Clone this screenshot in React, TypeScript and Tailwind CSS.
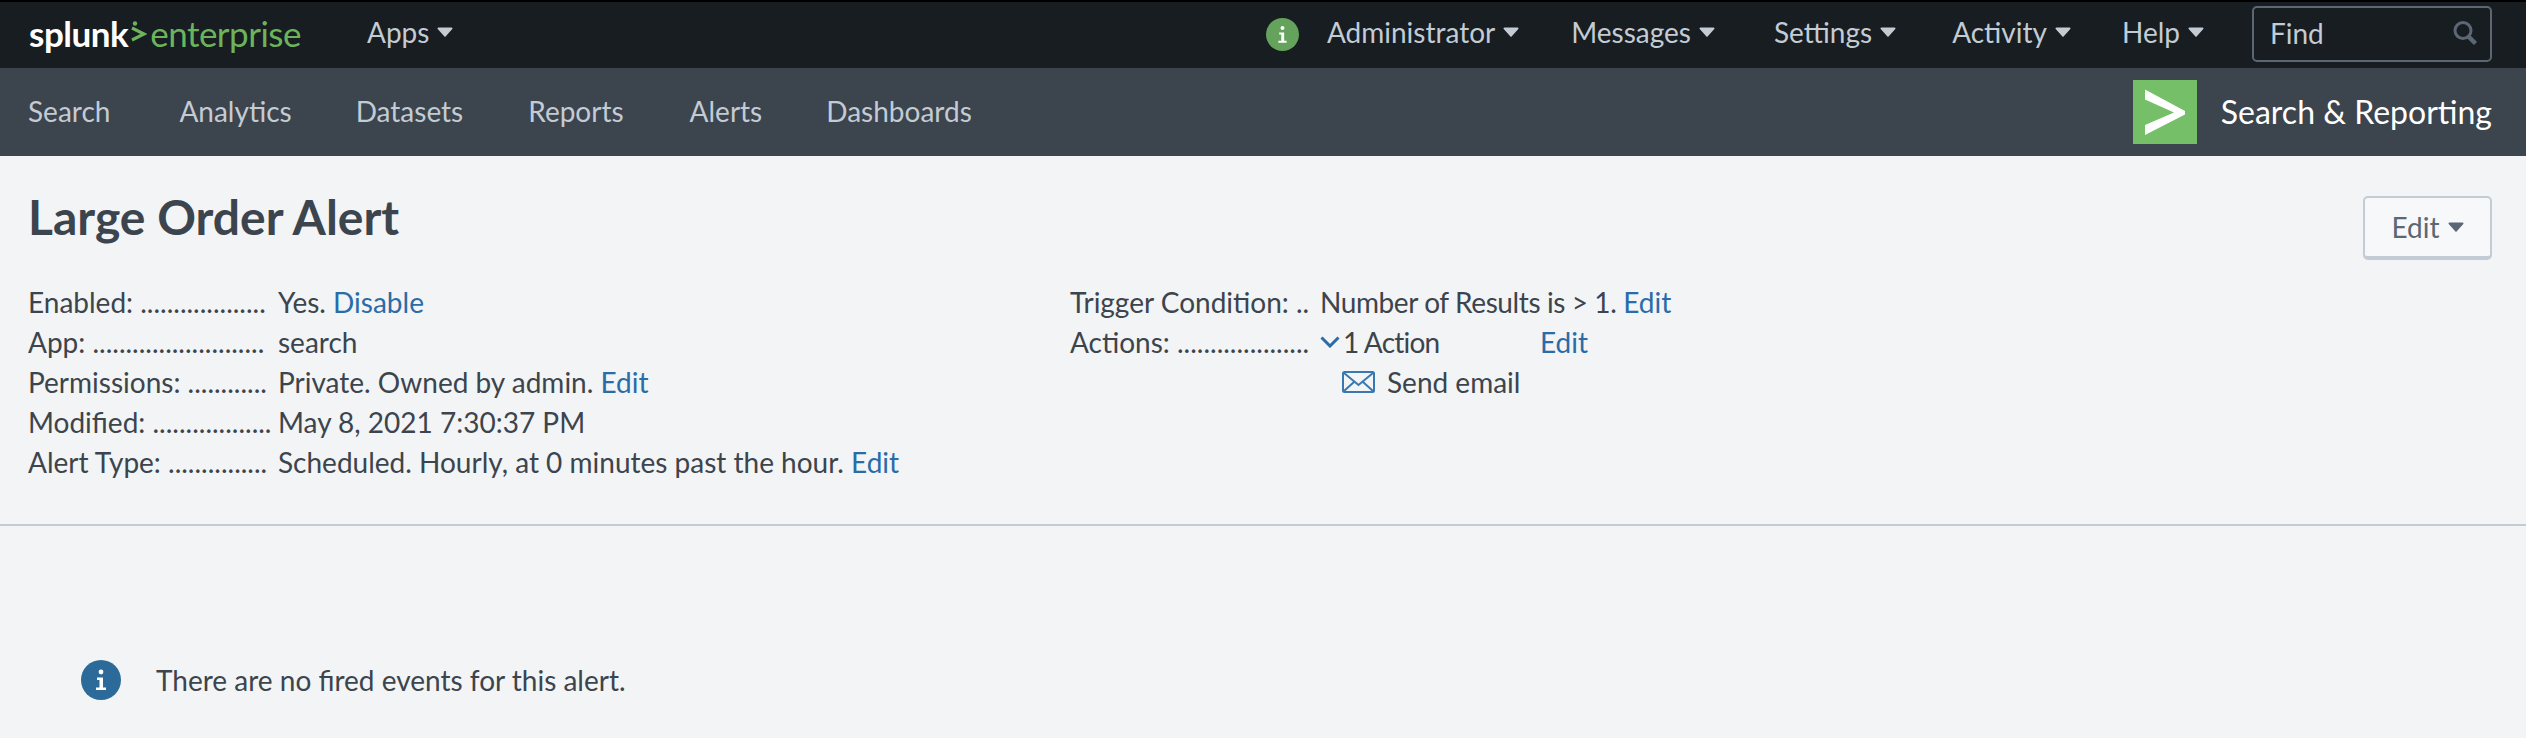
import type { FC, ReactNode } from 'react';

const Caret: FC<{ className?: string }> = ({ className }) => (
  <svg viewBox="0 0 16 10" className={className ?? 'ml-2 h-[10px] w-[16px]'} fill="currentColor">
    <path d="M1.5 0.5h13a1 1 0 0 1 .8 1.6L8.8 9.3a1 1 0 0 1-1.6 0L.7 2.1A1 1 0 0 1 1.500.5z" />
  </svg>
);

const InfoIcon: FC<{ className: string }> = ({ className }) => (
  <svg viewBox="0 0 40 40" className={className}>
    <circle cx="20" cy="20" r="20" fill="currentColor" />
    <circle cx="20" cy="12" r="2.400" fill="#fff" />
    <path d="M16 17.500h6v10h3v2.500h-10v-2.500h3.500v-7.500h-2.500z" fill="#fff" />
  </svg>
);

const topMenu = [
  { label: 'Administrator', gap: 'ml-[28px]' },
  { label: 'Messages', gap: 'ml-[52px]' },
  { label: 'Settings', gap: 'ml-[59px]' },
  { label: 'Activity', gap: 'ml-[56px]' },
  { label: 'Help', gap: 'ml-[51px]' },
];

const navItems = [
  { label: 'Search', gap: '' },
  { label: 'Analytics', gap: 'ml-[69px]' },
  { label: 'Datasets', gap: 'ml-[64px]' },
  { label: 'Reports', gap: 'ml-[65px]' },
  { label: 'Alerts', gap: 'ml-[66px]' },
  { label: 'Dashboards', gap: 'ml-[64px]' },
];

const Link: FC<{ children: string }> = ({ children }) => <a className="text-[#2b6ca8]">{children}</a>;

const Row: FC<{ label: string; dots: number; children: ReactNode }> = ({ label, dots, children }) => (
  <div className="flex h-[40px] items-center">
    <div className="w-[240px] shrink-0 whitespace-nowrap">
      {label} {'.'.repeat(dots)}
    </div>
    <div className="ml-[10px] flex items-center whitespace-pre">{children}</div>
  </div>
);

const App: FC = () => {
  return (
    <div className="flex h-[738px] w-[2526px] flex-col overflow-hidden bg-[#f2f4f5] font-['Lato',sans-serif] text-[28px] text-[#3c444d]">
      <header className="flex h-[68px] shrink-0 items-center border-t-2 border-black bg-[#171d21] pb-[2px] pl-[29px] pr-[34px] text-[#c3cbd4]">
        <div className="mt-[-2px] flex items-center text-[35px] leading-none tracking-[-0.5px]">
          <span className="font-bold text-white">splunk</span>
          <svg viewBox="0 0 16 26" className="mx-[3px] mt-[1px] h-[26px] w-[16px]">
            <circle cx="4" cy="2.500" r="2.200" fill="#6cb45c" />
            <path d="M1 7l12 6-12 6" fill="none" stroke="#6cb45c" strokeWidth="3.200" />
          </svg>
          <span className="text-[#6cb45c]">enterprise</span>
        </div>
        <div className="ml-[66px] flex items-center pb-[4px]">
          Apps
          <Caret />
        </div>
        <InfoIcon className="ml-auto h-[33px] w-[33px] text-[#65a35c]" />
        {topMenu.map((item) => (
          <div key={item.label} className={`flex items-center pb-[4px] ${item.gap}`}>
            {item.label}
            <Caret />
          </div>
        ))}
        <div className="ml-[48px] flex h-[56px] w-[240px] items-center justify-between rounded-[5px] border-2 border-[#5c6773] pl-[16px] pr-[12px]">
          <span className="pb-[2px]">Find</span>
          <svg viewBox="0 0 26 26" className="mb-[2px] h-[26px] w-[26px] text-[#5c6773]" fill="none" stroke="currentColor">
            <circle cx="11" cy="10.500" r="8" strokeWidth="3" />
            <path d="M16.500 16.500l7 7" strokeWidth="4.500" />
          </svg>
        </div>
      </header>

      <nav className="flex h-[88px] shrink-0 items-center bg-[#3c444d] pl-[28px] pr-[34px] text-[#c3cbd4]">
        <div className="flex pb-[3px]">
          {navItems.map((item) => (
            <span key={item.label} className={item.gap}>
              {item.label}
            </span>
          ))}
        </div>
        <div className="ml-auto flex items-center">
          <svg viewBox="0 0 64 64" className="h-[64px] w-[64px] bg-[#76bf69]">
            <path d="M12 9.500L52 31v3.500L12 55v-10l29-12.500L12 19.500z" fill="#fff" />
          </svg>
          <span className="ml-[24px] pb-[1px] text-[32px] text-white">Search &amp; Reporting</span>
        </div>
      </nav>

      <section className="h-[370px] shrink-0 border-b-2 border-[#c3cbd4] pl-[28px] pr-[34px]">
        <div className="flex items-start justify-between pt-[40px]">
          <h1 className="mt-[-11px] text-[48px] font-bold leading-[64px]">Large Order Alert</h1>
          <button className="flex h-[64px] w-[129px] items-center justify-center rounded-[5px] border-2 border-b-4 border-[#c3cbd4] bg-[#f7f8fa] text-[#5c6773]">
            Edit
            <Caret className="ml-[8px] h-[10px] w-[16px]" />
          </button>
        </div>
        <div className="mt-[22px] flex">
          <div className="w-[1042px] shrink-0">
            <Row label="Enabled:" dots={19}>
              Yes. <Link>Disable</Link>
            </Row>
            <Row label="App:" dots={26}>
              search
            </Row>
            <Row label="Permissions:" dots={12}>
              Private. Owned by admin. <Link>Edit</Link>
            </Row>
            <Row label="Modified:" dots={18}>
              May 8, 2021 7:30:37 PM
            </Row>
            <Row label="Alert Type:" dots={15}>
              Scheduled. Hourly, at 0 minutes past the hour. <Link>Edit</Link>
            </Row>
          </div>
          <div>
            <Row label="Trigger Condition:" dots={2}>
              <span className="tracking-[-0.4px]">Number of Results is &gt; 1. </span>
              <Link>Edit</Link>
            </Row>
            <Row label="Actions:" dots={20}>
              <svg viewBox="0 0 20 12" className="mr-[3px] h-[12px] w-[20px]" fill="none" stroke="#2b6ca8" strokeWidth="3">
                <path d="M1.500 1.500L10 10l8.500-8.500" />
              </svg>
              <span className="w-[197px] tracking-[-0.8px]">1 Action</span>
              <Link>Edit</Link>
            </Row>
            <div className="flex h-[40px] items-center pl-[272px]">
              <svg viewBox="0 0 33 22" className="h-[22px] w-[33px]" fill="none" stroke="#3a78b0" strokeWidth="2">
                <rect x="1" y="1" width="31" height="20" rx="1.500" />
                <path d="M2 2l14.500 12L31 2M2 20l10-9M31 20l-10-9" />
              </svg>
              <span className="ml-[12px]">Send email</span>
            </div>
          </div>
        </div>
      </section>

      <div className="flex items-center pl-[81px] pt-[133px]">
        <InfoIcon className="h-[40px] w-[40px] text-[#2c6b99]" />
        <span className="ml-[35px]">There are no fired events for this alert.</span>
      </div>
    </div>
  );
};

export default App;
